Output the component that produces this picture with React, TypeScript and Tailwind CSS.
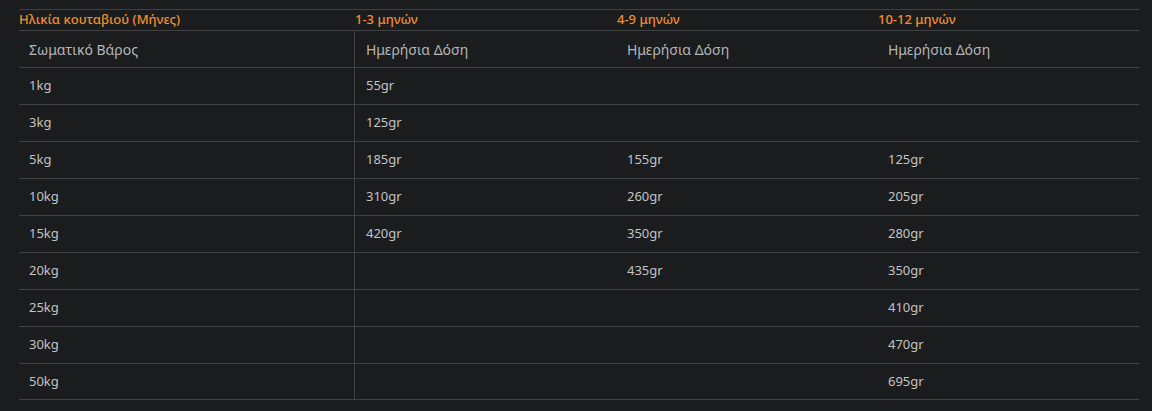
import React from "react";

const rows: [string, string, string, string][] = [
  ["1kg", "55gr", "", ""],
  ["3kg", "125gr", "", ""],
  ["5kg", "185gr", "155gr", "125gr"],
  ["10kg", "310gr", "260gr", "205gr"],
  ["15kg", "420gr", "350gr", "280gr"],
  ["20kg", "", "435gr", "350gr"],
  ["25kg", "", "", "410gr"],
  ["30kg", "", "", "470gr"],
  ["50kg", "", "", "695gr"],
];

const grid = "grid grid-cols-[336px_262px_261px_261px]";

export default function App() {
  return (
    <div
      className="w-[1152px] h-[411px] bg-[#1b1c1e] pt-[9px] pl-[19px]"
      style={{ fontFamily: '"Noto Sans", Inter, sans-serif' }}
    >
      <div className="w-[1120px] text-[13px]">
        <div className={`${grid} h-[21px] border-t border-[#3f4143] items-center font-medium text-[#f28f2c]`}>
          <div>Ηλικία κουταβιού (Μήνες)</div>
          <div>1-3 μηνών</div>
          <div>4-9 μηνών</div>
          <div>10-12 μηνών</div>
        </div>
        <div className={`${grid} h-[37px] border-t border-[#3f4143] items-center text-[14px] text-[#b4b6b8]`}>
          <div className="h-full flex items-center pl-[10px] border-r border-[#3f4143]">Σωματικό Βάρος</div>
          <div className="pl-[11px]">Ημερήσια Δόση</div>
          <div className="pl-[10px]">Ημερήσια Δόση</div>
          <div className="pl-[10px]">Ημερήσια Δόση</div>
        </div>
        {rows.map((r, i) => (
          <div
            key={i}
            className={`${grid} h-[37px] border-t border-[#3f4143] items-center text-[#c2c3c4] ${i === rows.length - 1 ? "border-b" : ""}`}
          >
            <div className="h-full flex items-center pl-[10px] border-r border-[#3f4143]">{r[0]}</div>
            <div className="pl-[11px]">{r[1]}</div>
            <div className="pl-[10px]">{r[2]}</div>
            <div className="pl-[10px]">{r[3]}</div>
          </div>
        ))}
      </div>
    </div>
  );
}
